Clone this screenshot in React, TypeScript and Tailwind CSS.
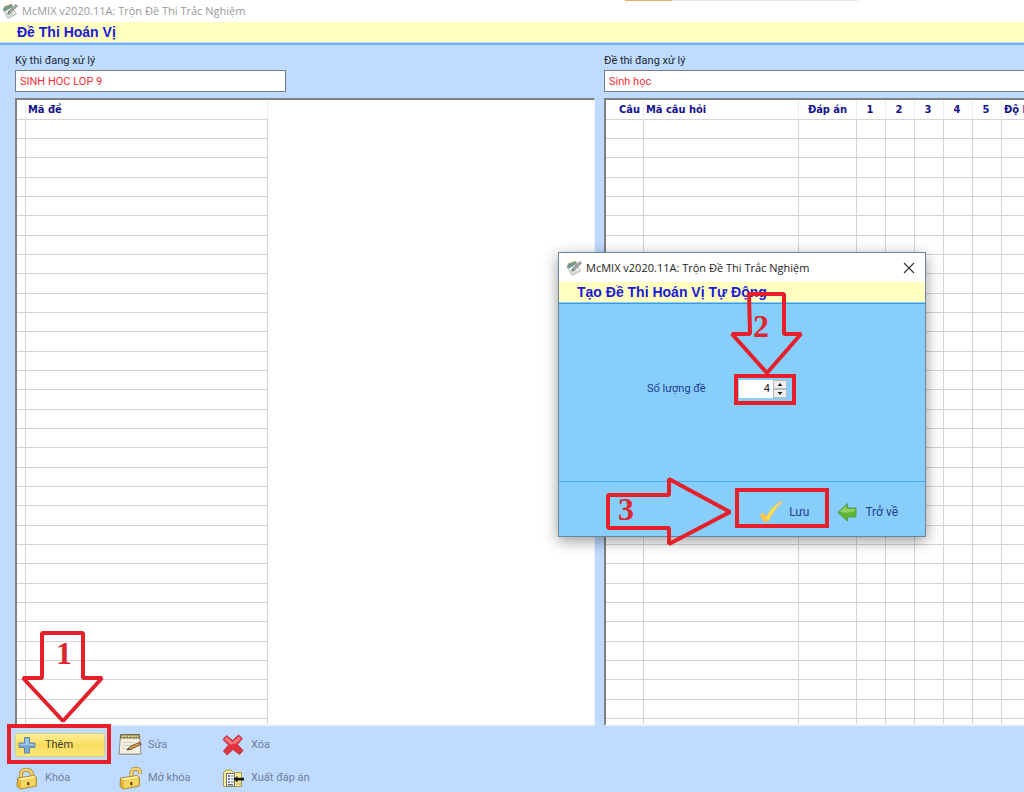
import type { ReactNode } from 'react';

const rows = Array.from({ length: 32 }, (_, i) => i);

function rowHeight(i: number) {
  return i % 3 === 2 ? 'h-5' : 'h-[19px]';
}

function AppIcon() {
  return (
    <svg viewBox="0 0 16 16" className="size-4 shrink-0" aria-hidden="true">
      <path d="M1 7 L10 4 L14.500 11 L6 15.500 Z" fill="#eef0ec" stroke="#a3a8a3" strokeWidth=".8" />
      <path d="M.8 6.500 L2.500 3.500 L10 1 L11 3.500 L3 8.500 Z" fill="#6f9a94" />
      <path d="M2 4 L5 2.500 M6.500 2.200 L9 1.300" stroke="#d9a84a" strokeWidth="1" />
      <path d="M5 12 L10 10 M6 13.500 L12 11" stroke="#b5bab5" strokeWidth=".8" />
      <path d="M14 1.500 L6.500 8.500 L5.500 11 L8 10.500 L15.500 3 Z" fill="#7d877f" stroke="#5c6660" strokeWidth=".5" />
      <path d="M14.200 2.500 L7.500 9.500" stroke="#dfe7df" strokeWidth=".8" />
    </svg>
  );
}

function PlusIcon() {
  return (
    <svg viewBox="0 0 24 24" className="size-6" aria-hidden="true">
      <path d="M9.500 4.500h5v5.500h5.500v4.500h-5.500v5.500h-5v-5.500h-5.500v-4.500h5.500z" fill="#79a8d2" stroke="#5c88b0" strokeWidth="1" strokeLinejoin="round" />
      <path d="M10.500 5.500h3v5.500h5.500v1h-14.500v-1h6z" fill="#a5c8e6" />
    </svg>
  );
}

function NoteIcon() {
  return (
    <svg viewBox="0 0 24 24" className="size-6" aria-hidden="true">
      <path d="M2.500 2.500h19l1.500 19h-22z" fill="#f2f1e2" stroke="#8d8e80" />
      <path d="M2.500 1.500h19v3.500h-19z" fill="#a69a5c" stroke="#74693a" />
      <path d="M4 3.500h16" stroke="#ece5b6" strokeWidth="1.500" strokeDasharray="1.500 1.500" />
      <path d="M5 9.500h12M4.500 12.500h9M4.500 15.500h5" stroke="#d0d1c5" />
      <path d="M1 20.500h22v1.500h-22z" fill="#9a9f94" />
      <path d="M9 17 L12 13.500 L22 9 L23.300 11.300 L13 16.300 Z" fill="#d39a50" stroke="#6d4b2e" strokeWidth=".9" />
      <path d="M8.500 17.200 L10.500 15 L12 16.500 Z" fill="#493a2b" />
      <path d="M21 9.200 L22.500 11.500" stroke="#be5a48" strokeWidth="1.500" />
    </svg>
  );
}

function CrossIcon() {
  return (
    <svg viewBox="0 0 24 24" className="size-6" aria-hidden="true">
      <path d="M5.500 2.500 L11.500 7.500 L17.500 2 L21.500 5.500 L16.500 11.500 L22 17.500 L18.500 21.500 L12 16.500 L6 22 L2.500 18 L7.500 12 L2 6.500 Z" fill="#e2323c" stroke="#b33440" strokeWidth=".9" strokeLinejoin="round" />
      <path d="M5.500 3.800 L11.500 9.300 L17.500 3.500 L20 5.500 L14.500 11 L12 10.500 L9.500 11.500 L3.500 6.500 Z" fill="#f27a7c" />
    </svg>
  );
}

function LockIcon({ open = false }: { open?: boolean }) {
  const shackle = open ? 'M13.500 11.500 V6.500 C13.500 1.500 21.500 1.500 22 6 V8' : 'M6 12 V8.500 C6 2 16 2 17.500 9 V11';
  return (
    <svg viewBox="0 0 24 24" className="size-6" aria-hidden="true">
      <path d={shackle} fill="none" stroke="#a88130" strokeWidth="4" />
      <path d={shackle} fill="none" stroke="#f2d573" strokeWidth="2.600" />
      <path d="M2.500 12 L19 9.500 L21.500 11.500 V20 L5.500 23 L2 20.500 Z" fill="#e6b53b" stroke="#a88130" strokeWidth=".9" strokeLinejoin="round" />
      <path d="M3 12.500 L19 10 L20.800 11.800 L6 14.500 Z" fill="#fff0a5" />
      <path d="M6 15 L20.500 12.500 V19.500 L6 22.300 Z" fill="#f6d561" />
      <path d="M12.500 16.500 L14 16.300 V19 H12.800 Z" fill="#5d461c" stroke="#5d461c" strokeWidth=".8" />
    </svg>
  );
}

function ExportIcon() {
  return (
    <svg viewBox="0 0 24 24" className="size-6" aria-hidden="true">
      <path d="M2.500 6.500 L5 4 H10 L12.500 6.500 H20.500 V20.500 H2.500 Z" fill="#f5ea92" stroke="#a39a55" />
      <path d="M5.500 7.500h8v12.500h-8z" fill="#fff" stroke="#6b6e60" />
      <path d="M7 10h2M7 13h2M7 16h2" stroke="#3545b5" strokeWidth="1.600" />
      <path d="M10 10h2.500M10 13h2.500M10 16h2.500M7 18.500h5" stroke="#666" />
      <path d="M12.500 13 L16.500 10 V11.800 H23 V14.500 H16.500 V16.500 Z" fill="#171717" />
      <path d="M15 18h5" stroke="#b5aa5a" />
    </svg>
  );
}

function CheckIcon() {
  return (
    <svg viewBox="0 0 24 24" className="size-6" aria-hidden="true">
      <path d="M1 15 L4.500 13 L7.500 17 C11 10 15.500 5 22.500 1 L23 2.500 C17 8 13 14 9.500 21 L5.500 22 Z" fill="#ffe34a" stroke="#e8bd6a" strokeWidth=".8" />
      <path d="M1.500 15 L4.500 13.500 L8 18.500 L9 20.800 L5.800 21.500 Z" fill="#ffc04a" />
      <path d="M17 6 L22.500 1.800 L22 3.500 L16.500 8.500 Z" fill="#e8cfa0" />
    </svg>
  );
}

function BackIcon() {
  return (
    <svg viewBox="0 0 20 20" className="size-5" aria-hidden="true">
      <path d="M.8 10.500 L10.500 1.500 V6 H19 V15 H10.500 V19 Z" fill="#5fb62f" stroke="#5a9a5a" strokeLinejoin="round" />
      <path d="M2.800 10 L9.500 3.800 V7 H18 V9 L10 11 Z" fill="#8fd166" />
    </svg>
  );
}

function ToolButton({ icon, children, active = false }: { icon: ReactNode; children: string; active?: boolean }) {
  return (
    <button
      type="button"
      className={
        active
          ? 'flex h-6 w-[90px] items-center gap-[6px] rounded-[2px] bg-linear-to-b from-[#fff09a] via-[#f9dd5f] to-[#fbe678] text-[#3d3d30] ring-1 ring-[#d8cf86] ring-inset'
          : 'flex h-6 items-center gap-[6px] text-[#6f7f96]'
      }
    >
      {icon}
      {children}
    </button>
  );
}

function FieldLabel({ id, label, value, width }: { id: string; label: string; value: string; width: string }) {
  return (
    <div className="flex flex-col">
      <label htmlFor={id} className="h-[17px] text-[#1c2733]">{label}</label>
      <input
        id={id}
        defaultValue={value}
        className={`h-[22px] border border-[#767c84] bg-white px-1 text-[#fb2c36] outline-none ${width}`}
      />
    </div>
  );
}

const panel = 'min-h-0 flex-1 overflow-hidden border-t-2 border-r border-b-2 border-l-2 border-t-[#808080] border-r-[#eef5ff] border-l-[#808080] border-b-[#f0f0f0] bg-white';
const th = 'h-5 border-r border-b border-r-[#ececec] border-b-[#d4d4d4] p-0 font-bold';
const td = 'border-r border-b border-[#d4d4d4] p-0';

function CodeTable() {
  return (
    <table className="w-[251px] table-fixed border-separate border-spacing-0">
      <colgroup>
        <col className="w-[9px]" />
        <col className="w-[242px]" />
      </colgroup>
      <thead className="font-['DejaVu_Sans_Condensed','DejaVu_Sans',sans-serif] text-[11px] leading-4 text-[#14148c]">
        <tr>
          <td className={th} />
          <th className={`${th} pl-[2px] text-left`}>Mã đề</th>
        </tr>
      </thead>
      <tbody>
        {rows.map((i) => (
          <tr key={i} className={rowHeight(i)}>
            <td className={td} />
            <td className={td} />
          </tr>
        ))}
      </tbody>
    </table>
  );
}

function QuestionTable() {
  return (
    <table className="w-[456px] table-fixed border-separate border-spacing-0">
      <colgroup>
        <col className="w-[38px]" />
        <col className="w-[155px]" />
        <col className="w-[58px]" />
        <col className="w-[29px]" />
        <col className="w-[29px]" />
        <col className="w-[29px]" />
        <col className="w-[29px]" />
        <col className="w-[29px]" />
        <col className="w-[60px]" />
      </colgroup>
      <thead className="font-['DejaVu_Sans_Condensed','DejaVu_Sans',sans-serif] text-[11px] leading-4 text-[#14148c]">
        <tr>
          <th className={`${th} pr-[3px] text-right`}>Câu</th>
          <th className={`${th} pl-[2px] text-left`}>Mã câu hỏi</th>
          <th className={`${th} text-center`}>Đáp án</th>
          {['1', '2', '3', '4', '5'].map((n) => (
            <th key={n} className={`${th} pr-[2px] text-center`}>{n}</th>
          ))}
          <th className={`${th} pl-[2px] text-left whitespace-nowrap`}>Độ khó</th>
        </tr>
      </thead>
      <tbody>
        {rows.map((i) => (
          <tr key={i} className={rowHeight(i)}>
            {Array.from({ length: 9 }, (_, c) => (
              <td key={c} className={td} />
            ))}
          </tr>
        ))}
      </tbody>
    </table>
  );
}

function Dialog() {
  return (
    <section
      role="dialog"
      aria-labelledby="dialog-title"
      className="absolute top-[252px] left-[558px] flex h-[285px] w-[368px] flex-col border border-[#6f8494] bg-[#87cefa] shadow-[0_4px_14px_rgba(0,0,0,0.4)]"
    >
      <header className="flex h-[29px] items-center gap-1 bg-white pr-[10px] pl-[7px]">
        <AppIcon />
        <h2 id="dialog-title" className="flex-1 font-['Open_Sans','Noto_Sans',sans-serif] text-[11px] text-[#222]">
          McMIX v2020.11A: Trộn Đề Thi Trắc Nghiệm
        </h2>
        <button type="button" aria-label="Đóng">
          <svg viewBox="0 0 12 12" className="size-3" aria-hidden="true">
            <path d="M1 1 L11 11 M11 1 L1 11" stroke="#333" strokeWidth="1.100" />
          </svg>
        </button>
      </header>
      <h3 className="h-5 bg-[#ffffbf] pl-[18px] font-['Liberation_Sans',sans-serif] text-[14px] leading-5 font-bold text-[#1a1ad8]">
        Tạo Đề Thi Hoán Vị Tự Động
      </h3>
      <div className="mt-px flex flex-1 items-center border-y border-t-[#3a9be0] border-b-[#3fb0f2] pb-[8px] text-[#1c3c96]">
        <label htmlFor="count" className="w-[180px] pl-[88px] whitespace-nowrap">Số lượng đề</label>
        <div className="flex h-[18px] w-[48px] bg-white">
          <input id="count" defaultValue="4" className="min-w-0 flex-1 pr-[3px] text-right text-[#222] outline-none" />
          <div className="flex w-[14px] flex-col">
            <button type="button" aria-label="Tăng" className="flex flex-1 items-center justify-center border border-[#bbb] bg-[#eee]">
              <svg viewBox="0 0 6 4" className="h-[3px] w-[6px]" aria-hidden="true"><path d="M0 4 L3 0 L6 4Z" fill="#111" /></svg>
            </button>
            <button type="button" aria-label="Giảm" className="flex flex-1 items-center justify-center border border-[#bbb] bg-[#eee]">
              <svg viewBox="0 0 6 4" className="h-[3px] w-[6px]" aria-hidden="true"><path d="M0 0 L3 4 L6 0Z" fill="#111" /></svg>
            </button>
          </div>
        </div>
      </div>
      <footer className="flex h-[54px] items-center justify-end pt-[6px] pr-[27px] text-[12px] text-[#263c94]">
        <button type="button" className="flex items-center gap-[6px] pr-[28px]">
          <CheckIcon />
          Lưu
        </button>
        <button type="button" className="flex items-center gap-2">
          <BackIcon />
          Trở về
        </button>
      </footer>
    </section>
  );
}

function Annotations() {
  return (
    <>
      <svg viewBox="0 0 1024 792" className="pointer-events-none absolute top-0 left-0 h-[792px] w-[1024px]" fill="none" stroke="#e6202b" strokeWidth="4" aria-hidden="true">
        <path d="M42 633 H83 V678 H102 L63 721 L23 678 H42 Z" strokeLinejoin="bevel" />
        <path d="M749 294 H784 V334 H801 L767 373 L732 334 H750 Z" strokeLinejoin="bevel" />
        <path d="M608 495 H669 V479 L730 512 L669 544 V528 H608 Z" strokeLinejoin="bevel" />
        <rect x="9" y="726" width="100" height="36" />
        <rect x="736" y="376" width="58" height="27" />
        <rect x="737" y="490" width="90" height="36" />
      </svg>
      <div className="pointer-events-none font-['Liberation_Serif',serif] text-[32px] leading-8 font-bold text-[#dd2630]">
        <span className="absolute top-[637px] left-[56px]">1</span>
        <span className="absolute top-[310px] left-[753px]">2</span>
        <span className="absolute top-[493px] left-[618px]">3</span>
      </div>
    </>
  );
}

export default function App() {
  return (
    <main className="relative flex h-screen min-h-[792px] flex-col overflow-hidden bg-[#bfdbff] font-['Roboto','Noto_Sans',sans-serif] text-[11px] leading-4">
      <header className="relative flex h-[22px] shrink-0 items-center gap-1 bg-white pl-[2px]">
        <AppIcon />
        <h1 className="font-['Open_Sans','Noto_Sans',sans-serif] text-[11px] text-[#999]">McMIX v2020.11A: Trộn Đề Thi Trắc Nghiệm</h1>
        <div className="absolute top-0 left-[625px] flex h-px w-[233px] bg-[#e6e6e6]">
          <div className="w-[47px] bg-[#f0b26b]" />
        </div>
      </header>
      <h2 className="h-5 shrink-0 bg-[#ffffbf] pl-[17px] font-['Liberation_Sans',sans-serif] text-[14px] leading-5 font-bold text-[#1a1ad8]">
        Đề Thi Hoán Vị
      </h2>
      <div className="mt-px h-[2px] shrink-0 bg-[#74afff]" />
      <div className="grid min-h-0 flex-1 grid-cols-[58fr_42fr] gap-[9px] pt-2 pl-[15px]">
        <section className="flex min-h-0 min-w-0 flex-col gap-[6px]">
          <FieldLabel id="exam" label="Kỳ thi đang xử lý" value="SINH HOC LOP 9" width="w-[271px]" />
          <div className={panel}>
            <CodeTable />
          </div>
        </section>
        <section className="flex min-h-0 min-w-0 flex-col gap-[6px]">
          <FieldLabel id="paper" label="Đề thi đang xử lý" value="Sinh học" width="w-full border-r-0" />
          <div className={`${panel} border-r-0`}>
            <QuestionTable />
          </div>
        </section>
      </div>
      <footer className="grid h-[66px] shrink-0 grid-cols-[103px_103px_1fr] content-start justify-items-start gap-y-[9px] pt-[7px] pl-[15px]">
        <ToolButton icon={<PlusIcon />} active>Thêm</ToolButton>
        <ToolButton icon={<NoteIcon />}>Sửa</ToolButton>
        <ToolButton icon={<CrossIcon />}>Xóa</ToolButton>
        <ToolButton icon={<LockIcon />}>Khóa</ToolButton>
        <ToolButton icon={<LockIcon open />}>Mở khóa</ToolButton>
        <ToolButton icon={<ExportIcon />}>Xuất đáp án</ToolButton>
      </footer>
      <Dialog />
      <Annotations />
    </main>
  );
}
